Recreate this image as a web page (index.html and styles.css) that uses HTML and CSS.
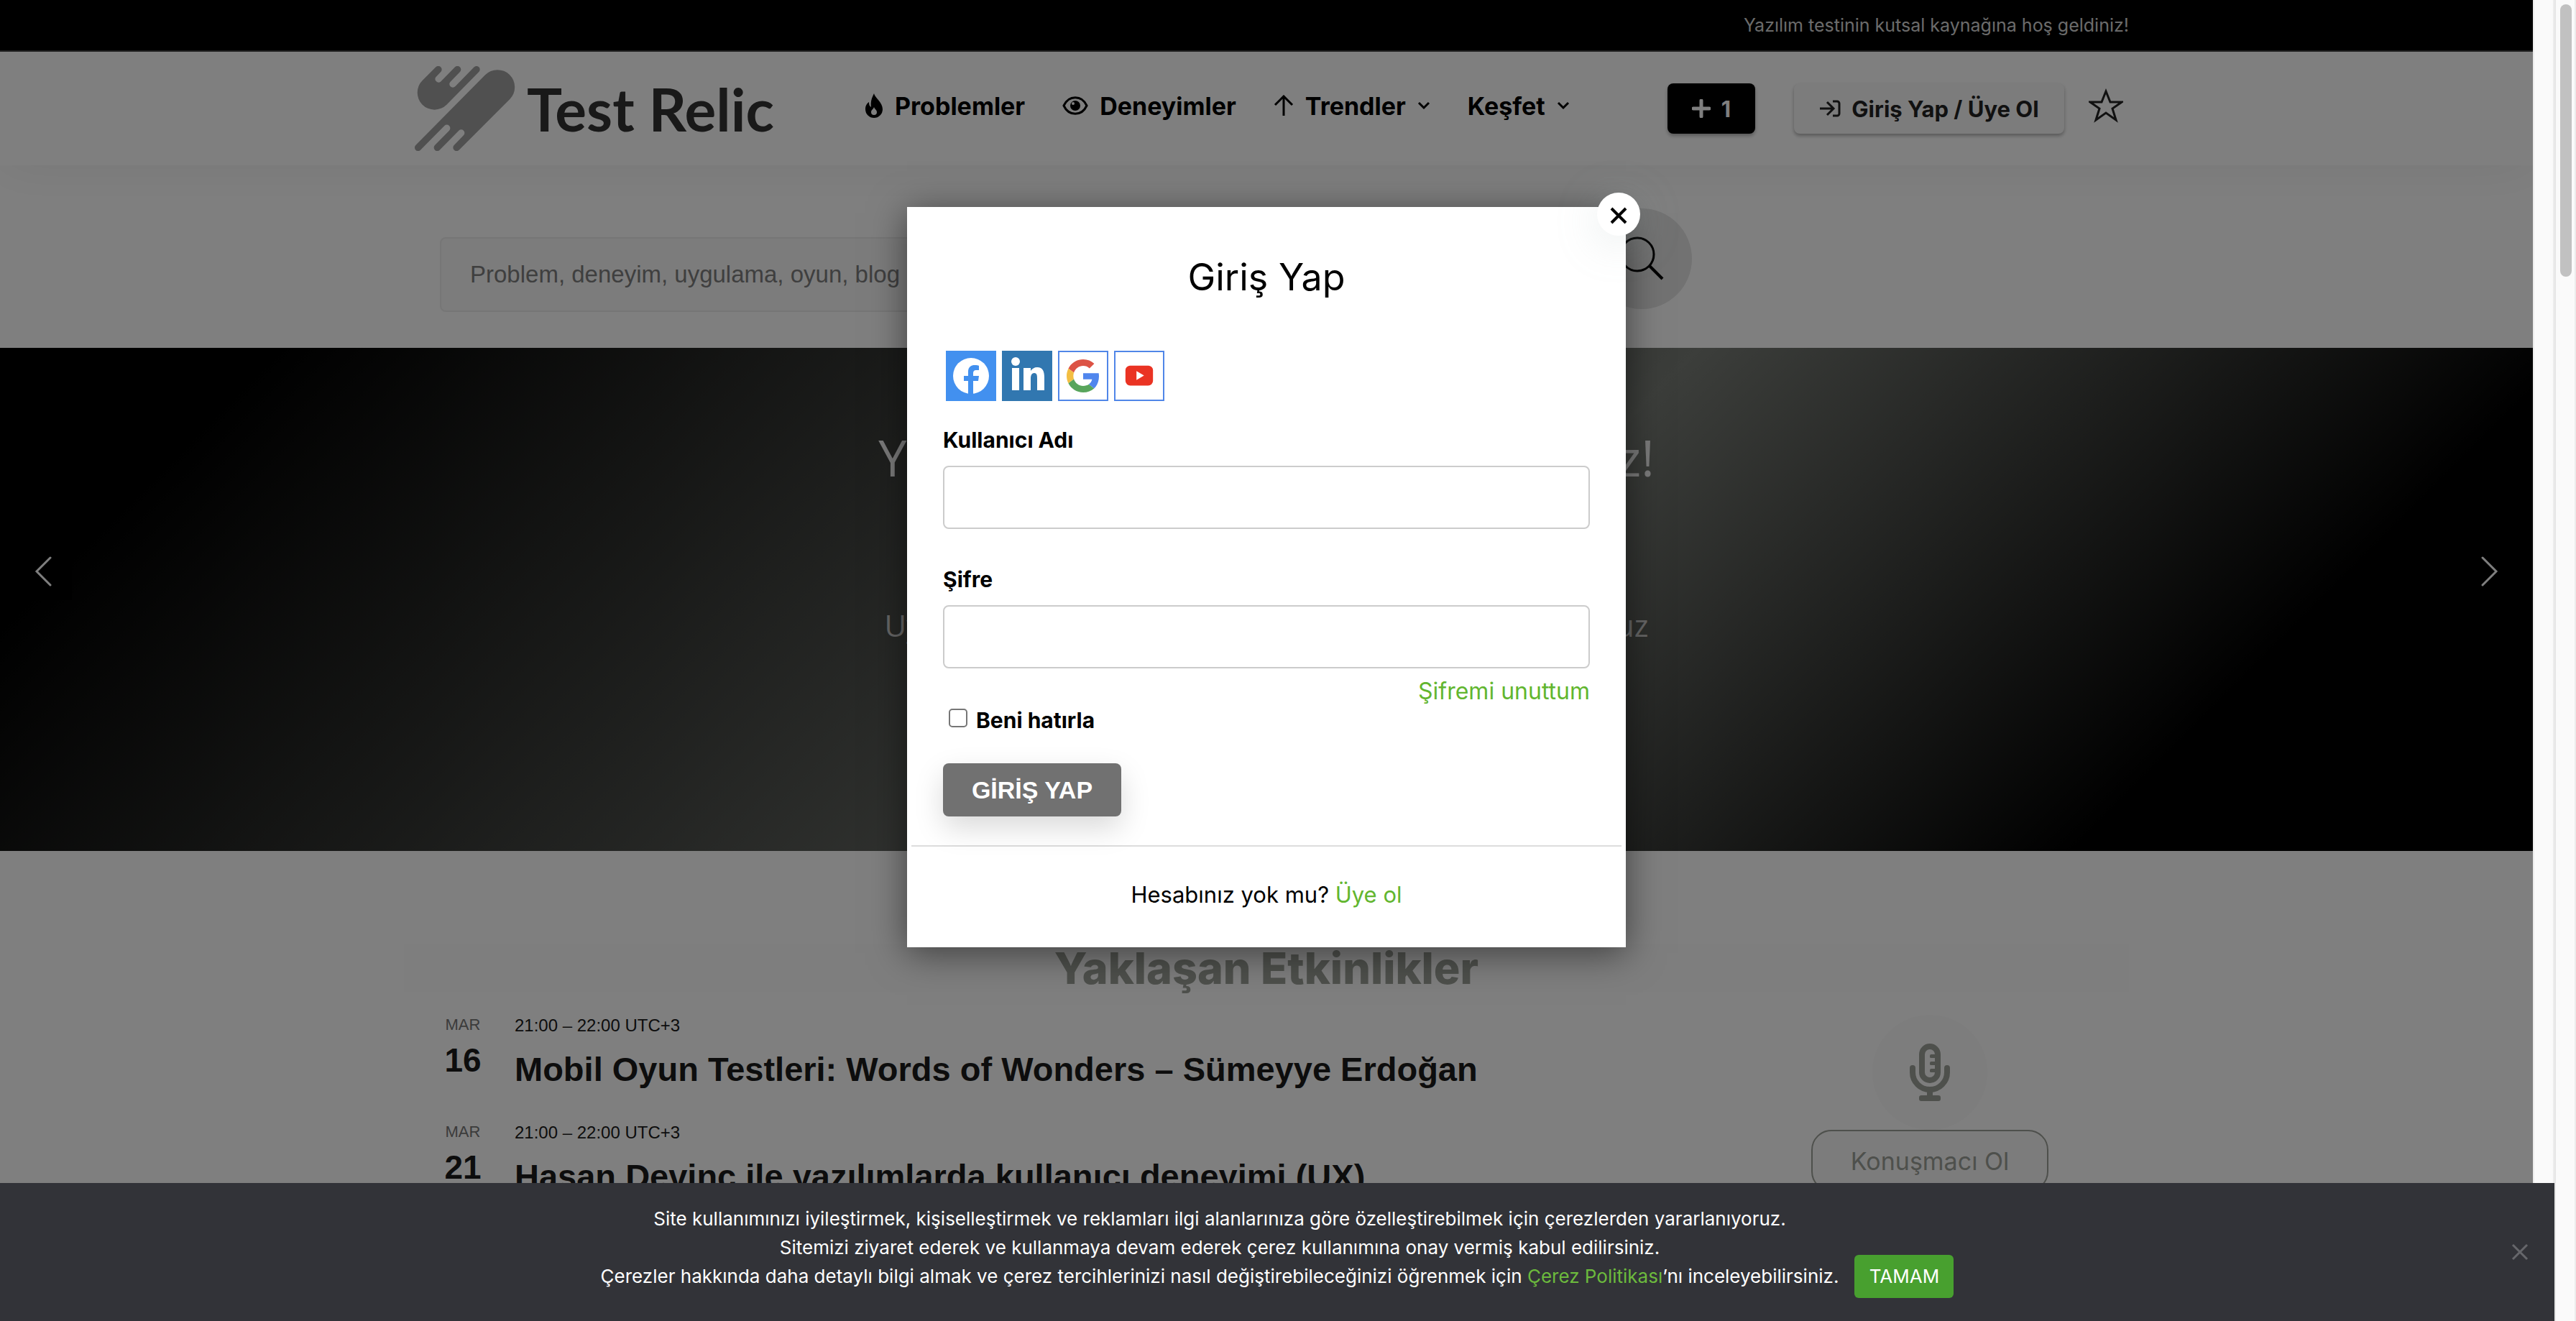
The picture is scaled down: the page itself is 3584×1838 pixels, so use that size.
FILE: index.html
```html
<!DOCTYPE html>
<html lang="tr">
<head>
<meta charset="utf-8">
<title>Test Relic</title>
<link rel="stylesheet" href="styles.css">
</head>
<body>
<div class="viewport">
  <div class="page">
    <div class="topbar"><p class="container topbar-text">Yazılım testinin kutsal kaynağına hoş geldiniz!</p></div>

    <header class="header">
      <div class="container header-row">
        <a class="logo" href="#">
          <svg class="logo-mark" viewBox="0 0 420 354" aria-hidden="true">
            <g fill="#a0a0a0">
              <path d="M88 4a14 14 0 0 1 21 20L88 46a14 14 0 0 0 20 19l60-61a14 14 0 0 1 21 20l-40 41a14 14 0 0 0 20 20l79-81a14 14 0 0 1 20 20L133 161A71 71 0 0 1 32 60Z"/>
              <path d="M294 37a71 71 0 0 1 103 101L185 350a14 14 0 0 1-21-20l40-41a14 14 0 0 0-20-20l-80 81a14 14 0 0 1-20-20l60-61a14 14 0 0 0-20-20L24 350a14 14 0 0 1-20-20Z"/>
            </g>
          </svg>
          <span class="logo-text">Test Relic</span>
        </a>
        <nav class="nav">
          <a href="#"><svg width="26" height="34" viewBox="0 0 26 34"><path d="M13 0c1 6 12 12 12 22a12 12 0 0 1-24 0c0-5 2-8 5-10 0 4 1 6 3 7-1-8 1-13 4-19Z"/><path d="M13 19c1 3 4 4 4 7a4 4 0 0 1-8 0c0-3 3-4 4-7Z" fill="#fff"/></svg>Problemler</a>
          <a href="#"><svg width="36" height="26" viewBox="0 0 36 26"><path d="M2 13C9-2 27-2 34 13 27 28 9 28 2 13Z" fill="none" stroke="#000" stroke-width="3"/><circle cx="18" cy="13" r="7"/><circle cx="15" cy="10" r="2" fill="#fff"/></svg>Deneyimler</a>
          <a href="#"><svg width="28" height="30" viewBox="0 0 28 30"><path d="M14 29V2M2 14 14 2l12 12" fill="none" stroke="#000" stroke-width="3"/></svg>Trendler<svg width="18" height="12" viewBox="0 0 18 12"><path d="m2 2 7 7 7-7" fill="none" stroke="#000" stroke-width="3"/></svg></a>
          <a href="#">Keşfet<svg width="18" height="12" viewBox="0 0 18 12"><path d="m2 2 7 7 7-7" fill="none" stroke="#000" stroke-width="3"/></svg></a>
        </nav>
        <div class="actions">
          <button class="btn btn-dark" type="button"><svg width="26" height="26" viewBox="0 0 26 26"><path d="M13 2v22M2 13h22" stroke="#fff" stroke-width="5" stroke-linecap="round"/></svg>1</button>
          <button class="btn btn-light" type="button"><svg width="30" height="24" viewBox="0 0 30 24"><path d="M1 12h18M11 3l9 9-9 9M19 2h6a3 3 0 0 1 3 3v14a3 3 0 0 1-3 3h-6" fill="none" stroke="#222" stroke-width="3"/></svg>Giriş Yap / Üye Ol</button>
          <a class="star" href="#" aria-label="Favoriler"><svg width="48" height="48" viewBox="0 0 48 48"><path d="m24 4 6 15h16L33 28l5 16-14-10-14 10 5-16L2 19h16Z" fill="none" stroke="#222" stroke-width="3"/></svg></a>
        </div>
      </div>
    </header>

    <form class="container search">
      <input class="search-input" type="text" aria-label="Ara" placeholder="Problem, deneyim, uygulama, oyun, blog ara">
      <button class="search-btn" type="button" aria-label="Ara"><svg width="62" height="62" viewBox="0 0 62 62"><path d="m42 41 18 18" stroke="#000" stroke-width="4"/><circle cx="25" cy="25" r="23" fill="none" stroke="#000" stroke-width="3"/></svg></button>
    </form>

    <section class="hero">
      <button class="arrow" type="button" aria-label="Önceki"><svg width="24" height="42" viewBox="0 0 24 42"><path d="M22 2 3 21l19 19" fill="none" stroke="#fff" stroke-width="3" stroke-linecap="round"/></svg></button>
      <div class="hero-text">
        <h1>Yazılım problemleri keşfediyoruz!</h1>
        <p>Uygulamalarda yaşadığınız sorunları hızla paylaşıyoruz</p>
      </div>
      <button class="arrow" type="button" aria-label="Sonraki"><svg width="24" height="42" viewBox="0 0 24 42"><path d="m2 2 19 19L2 40" fill="none" stroke="#fff" stroke-width="3" stroke-linecap="round"/></svg></button>
    </section>

    <section class="events">
      <div class="container">
        <h2 class="events-title">Yaklaşan Etkinlikler</h2>
        <div class="events-body">
          <ul class="event-list">
            <li class="event">
              <div class="event-date"><span>MAR</span><strong>16</strong></div>
              <div class="event-info"><time>21:00 – 22:00 UTC+3</time><h3>Mobil Oyun Testleri: Words of Wonders – Sümeyye Erdoğan</h3></div>
            </li>
            <li class="event">
              <div class="event-date"><span>MAR</span><strong>21</strong></div>
              <div class="event-info"><time>21:00 – 22:00 UTC+3</time><h3>Hasan Devinç ile yazılımlarda kullanıcı deneyimi (UX)</h3></div>
            </li>
          </ul>
          <aside class="speaker">
            <span class="mic"><svg width="56" height="80" viewBox="0 0 56 80"><g fill="none" stroke="#9ca098" stroke-width="8"><rect x="17" y="4" width="22" height="47" rx="11"/><path d="M4 34v6a24 24 0 0 0 48 0v-6" stroke-linecap="round"/><path d="M28 65v8"/></g><path d="M37 15h-7q-2 0-2 2v2q0 1 2 1h7zm0 10h-7q-2 0-2 2v2q0 1 2 1h7zm0 10h-7q-2 0-2 2v2q0 1 2 1h7z" fill="#9ca098"/><rect x="13" y="72" width="30" height="8" rx="3" fill="#9ca098"/></svg></span>
            <button class="speaker-btn" type="button">Konuşmacı Ol</button>
          </aside>
        </div>
      </div>
    </section>
  </div>

  <div class="overlay">
    <div class="modal" role="dialog" aria-labelledby="login-title">
      <button class="modal-close" type="button" aria-label="Kapat"><svg width="24" height="24" viewBox="0 0 24 24"><path d="m2 2 20 20M22 2 2 22" stroke="#000" stroke-width="4"/></svg></button>
      <form class="login">
        <h2 id="login-title">Giriş Yap</h2>
        <div class="social">
          <a href="#" class="fb" aria-label="Facebook"><svg viewBox="0 0 70 70"><circle cx="35" cy="35" r="25" fill="#fff"/><path d="M31 61V42h-6v-7h6v-6c0-6 4-9 9-9 3 0 5 0 6 1v6h-4c-3 0-4 2-4 4v4h8l-1 7h-7v19z" fill="#4290ef"/></svg></a>
          <a href="#" class="in" aria-label="LinkedIn"><svg viewBox="0 0 70 70" fill="#fff"><circle cx="19" cy="15" r="6"/><path d="M14 24h10v31H14zM30 24h10v4c2-3 5-5 9-5 8 0 10 6 10 14v18H49V39c0-4 0-8-4-8s-5 4-5 8v16H30z"/></svg></a>
          <a href="#" class="outline" aria-label="Google"><svg viewBox="0 0 48 48"><path fill="#dc5345" d="M24 9.500c3.540 0 6.710 1.220 9.210 3.600l6.850-6.850C35.900 2.380 30.470 0 24 0 14.620 0 6.510 5.380 2.560 13.220l7.980 6.190C12.430 13.720 17.740 9.500 24 9.500z"/><path fill="#5086ed" d="M46.980 24.550c0-1.570-.15-3.090-.38-4.550H24v9.020h12.940c-.58 2.960-2.260 5.480-4.780 7.180l7.730 6c4.510-4.180 7.090-10.360 7.090-17.650z"/><path fill="#f3be42" d="M10.530 28.590c-.48-1.450-.76-2.990-.76-4.590s.27-3.140.76-4.590l-7.980-6.190C.92 16.460 0 20.120 0 24c0 3.880.92 7.540 2.560 10.780l7.970-6.190z"/><path fill="#58a55c" d="M24 48c6.480 0 11.930-2.130 15.890-5.810l-7.730-6c-2.150 1.450-4.920 2.300-8.160 2.300-6.260 0-11.570-4.220-13.470-9.910l-7.980 6.190C6.510 42.620 14.620 48 24 48z"/></svg></a>
          <a href="#" class="outline" aria-label="YouTube"><svg viewBox="0 0 48 48"><rect x="4" y="9" width="40" height="29" rx="7" fill="#ea3323"/><path d="M20 17v13l11-6.500z" fill="#fff"/></svg></a>
        </div>
        <label class="field-label" for="user">Kullanıcı Adı</label>
        <input class="field" id="user" type="text">
        <label class="field-label" for="pass">Şifre</label>
        <input class="field last" id="pass" type="password">
        <a class="forgot" href="#">Şifremi unuttum</a>
        <label class="remember"><input type="checkbox">Beni hatırla</label>
        <button class="submit" type="button">GİRİŞ YAP</button>
      </form>
      <p class="signup">Hesabınız yok mu? <a href="#">Üye ol</a></p>
    </div>
  </div>
  <div class="track"></div>
</div>

<div class="scrollbar"><div class="thumb"></div></div>

<div class="cookie">
  <div class="cookie-content">
    <p>Site kullanımınızı iyileştirmek, kişiselleştirmek ve reklamları ilgi alanlarınıza göre özelleştirebilmek için çerezlerden yararlanıyoruz.<br>Sitemizi ziyaret ederek ve kullanmaya devam ederek çerez kullanımına onay vermiş kabul edilirsiniz.<br>Çerezler hakkında daha detaylı bilgi almak ve çerez tercihlerinizi nasıl değiştirebileceğinizi öğrenmek için <a href="#">Çerez Politikası</a>’nı inceleyebilirsiniz.</p>
    <button class="accept" type="button">TAMAM</button>
  </div>
  <button class="cookie-close" type="button" aria-label="Kapat"><svg width="24" height="24" viewBox="0 0 24 24"><path d="m2 2 20 20M22 2 2 22" stroke="#66676b" stroke-width="3"/></svg></button>
</div>
</body>
</html>
```
FILE: styles.css
```css
* { box-sizing: border-box; }
body {
  margin: 0;
  height: 100vh;
  overflow: hidden;
  display: grid;
  grid-template-columns: 1fr 30px;
  font-family: Inter, "Liberation Sans", sans-serif;
  color: #000;
}
h1, h2, h3, p, ul { margin: 0; padding: 0; }
a { color: inherit; text-decoration: none; }
button { border: 0; padding: 0; font: inherit; cursor: pointer; }
svg { display: block; flex: none; }

.viewport {
  position: relative;
  height: 100vh;
  overflow: hidden;
  display: grid;
  grid-template-columns: 1fr 30px;
}
.page { height: 100vh; overflow: hidden; background: #fff; }
.container { width: 100%; max-width: 2400px; margin: 0 auto; }

.track { grid-column: 2; background: #fafafa; border-left: 2px solid #ededed; border-right: 2px solid #ececec; }
.scrollbar { background: #fafafa; border-left: 2px solid #e6e6e6; border-right: 2px solid #ececec; padding: 6px 4px 6px 6px; }
.thumb { height: 379px; width: 16px; border-radius: 8px; background: #c1c1c1; }

.topbar { background: #000; border-bottom: 2px solid #444; }
.topbar-text { text-align: right; font-size: 25px; line-height: 70px; color: #d8d8d8; }

.header { position: relative; background: #fff; box-shadow: 0 0 72px rgba(0, 0, 0, .07); }
.header-row { height: 158px; display: flex; align-items: center; }
.logo { display: flex; align-items: center; gap: 16px; padding-left: 15px; }
.logo-mark { width: 140px; height: 118px; }
.logo-text { font: 700 82px/96px Lato, sans-serif; color: #333; white-space: nowrap; }
.nav { display: flex; gap: 52px; margin-left: 126px; padding-bottom: 8px; font-size: 34px; font-weight: 700; }
.nav a { display: flex; align-items: center; gap: 16px; white-space: nowrap; }
.actions { display: flex; align-items: center; margin-left: auto; padding-right: 8px; }
.btn { height: 70px; border-radius: 8px; display: flex; align-items: center; justify-content: center; gap: 15px; font-size: 31px; font-weight: 700; box-shadow: 0 3px 5px rgba(0, 0, 0, .3); }
.btn-dark { width: 122px; background: #000; color: #fff; margin-right: 54px; }
.btn-light { width: 376px; background: #f8f8f8; color: #222; margin-right: 34px; }
.star { padding-bottom: 8px; }

.search { display: flex; align-items: center; padding: 60px 608px 54px 50px; height: 254px; }
.search-input { flex: 1; min-width: 0; height: 104px; margin-top: 44px; border: 2px solid #ececec; border-radius: 8px; background: #f8f8f8; padding: 0 40px; font: 33px "Liberation Sans", sans-serif; }
.search-input::placeholder { color: #7e7e7e; opacity: 1; }
.search-btn { width: 140px; height: 140px; border-radius: 50%; background: #e4e4e4; display: grid; place-items: center; }

.hero {
  height: 700px;
  display: flex;
  align-items: center;
  justify-content: space-between;
  padding: 0 20px;
  background: linear-gradient(135deg, #000 9%, #787c76 56%, #000 85%);
  font-family: "Open Sans", sans-serif;
}
.arrow { width: 80px; height: 80px; margin-bottom: 78px; background: rgba(0, 0, 0, .7); display: grid; place-items: center; }
.hero-text { align-self: flex-start; padding-top: 102px; text-align: center; color: #f4f4f4; }
.hero h1 { font-size: 70px; font-weight: 400; line-height: 100px; }
.hero p { font-size: 42px; line-height: 60px; padding-top: 154px; color: #ccc; }

.events { padding-top: 130px; min-height: 800px; }
.events-title { font-size: 61px; line-height: 66px; font-weight: 800; text-align: center; color: #9ca098; background: #fcfcfc; }
.events-body { display: flex; justify-content: space-between; padding: 32px 112px 0 54px; background: #fefefe; }
.event-list { list-style: none; font-family: "Liberation Sans", Arial, sans-serif; color: #1a1a1a; }
.event { display: flex; gap: 44px; height: 149px; }
.event-date { width: 56px; display: flex; flex-direction: column; align-items: center; }
.event-date span { font-size: 22px; line-height: 28px; color: #777; }
.event-date strong { font-size: 46px; line-height: 70px; }
.event-info time { display: block; font-size: 24px; line-height: 30px; }
.event-info h3 { font-size: 47px; line-height: 92px; white-space: nowrap; }
.speaker { display: flex; flex-direction: column; align-items: center; }
.mic { width: 160px; height: 160px; border-radius: 50%; background: #fafafa; display: grid; place-items: center; }
.speaker-btn { width: 330px; height: 86px; border: 2px solid #9ca098; border-radius: 28px; background: #f9f9f9; color: #9ca098; font-size: 34px; }

/* Login dialog */
.overlay { position: absolute; inset: 0 30px 0 0; background: rgba(0, 0, 0, .5); padding-top: 288px; }
.modal { position: relative; width: 1000px; margin: 0 auto; background: #fff; box-shadow: 0 8px 48px rgba(0, 0, 0, .5); }
.modal-close { position: absolute; top: -20px; right: -20px; width: 60px; height: 60px; border-radius: 50%; background: #fff; box-shadow: 0 10px 60px rgba(160, 180, 180, .25); display: grid; place-items: center; }
.modal-close svg { margin-top: 4px; }
.login { display: flex; flex-direction: column; align-items: flex-start; padding: 60px 50px 40px; }
.login h2 { align-self: center; font-size: 52px; line-height: 76px; font-weight: 400; }
.social { display: flex; gap: 8px; padding: 64px 4px 0; }
.social a { width: 70px; height: 70px; display: grid; place-items: center; }
.social .fb { background: #4290ef; }
.social .in { background: #3177b0; }
.social .outline { border: 2px solid #5086e8; background: #fff; }
.fb svg, .in svg { width: 70px; height: 70px; }
.outline svg { width: 46px; height: 46px; }
.field-label { font-size: 30px; line-height: 40px; font-weight: 700; margin-top: 34px; }
.field { width: 100%; height: 88px; border: 2px solid #ccc; border-radius: 8px; background: #fff; padding: 0 24px; margin: 16px 0 16px; font-size: 28px; }
.field.last { margin: 16px 0 12px; }
.forgot { align-self: flex-end; font-size: 32px; line-height: 40px; color: #62b62f; }
.remember { display: flex; align-items: center; gap: 12px; padding-left: 8px; font-size: 30px; line-height: 40px; font-weight: 700; }
.remember input { appearance: none; width: 26px; height: 26px; margin: 0 0 6px; border: 2px solid #767676; border-radius: 5px; background: #fff; }
.submit { width: 248px; height: 74px; margin-top: 40px; border-radius: 8px; background: #717171; color: #fff; font: 700 34px "Liberation Sans", sans-serif; box-shadow: 0 16px 40px rgba(0, 0, 0, .15); }
.signup { margin: 0 6px; padding: 46px 0 52px; border-top: 2px solid #ddd; text-align: center; font-size: 31px; line-height: 42px; }
.signup a { color: #62b62f; }

/* Cookie notice */
.cookie { position: fixed; left: 0; right: 30px; bottom: 0; height: 192px; background: #323338; color: #fff; display: flex; justify-content: center; font-size: 26px; line-height: 40px; }
.cookie-content { display: flex; align-items: flex-end; gap: 22px; padding-bottom: 32px; }
.cookie-content p { text-align: center; padding-bottom: 10px; white-space: nowrap; }
.cookie-content a { color: #6cba3d; }
.accept { width: 138px; height: 60px; border-radius: 6px; background: #48a02f; color: #fff; }
.cookie-close { position: absolute; right: 36px; top: 84px; background: none; }
```
